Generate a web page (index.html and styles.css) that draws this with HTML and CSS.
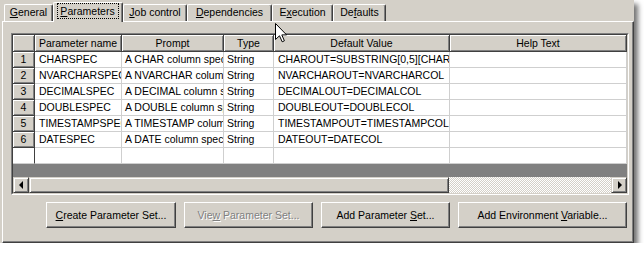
FILE: index.html
```html
<!DOCTYPE html>
<html lang="en">
<head>
  <meta charset="UTF-8" />
  <title>Job Properties – Parameters</title>
  <link rel="stylesheet" href="styles.css">
</head>
<body>
<div class="window">

  <!-- ── Tab strip ───────────────────────── -->
  <div class="tabs">
    <div class="tab t-general"><u>G</u>eneral</div>
    <div class="tab tab-active t-params"><span class="focus"><u>P</u>arameters</span></div>
    <div class="tab t-job"><u>J</u>ob control</div>
    <div class="tab t-deps"><u>D</u>ependencies</div>
    <div class="tab t-exec">E<u>x</u>ecution</div>
    <div class="tab t-defaults">De<u>f</u>aults</div>
  </div>

  <div class="panel">

    <!-- ── Parameter grid ──────────────────── -->
    <div class="grid">
      <div class="grid-inner">
        <div class="row grid-head">
          <div class="cell rh"></div>
          <div class="cell hd">Parameter name</div>
          <div class="cell hd">Prompt</div>
          <div class="cell hd">Type</div>
          <div class="cell hd">Default Value</div>
          <div class="cell hd">Help Text</div>
        </div>
        <div class="row">
          <div class="cell rh">1</div>
          <div class="cell">CHARSPEC</div>
          <div class="cell c-tight">A CHAR column spec</div>
          <div class="cell c-tight">String</div>
          <div class="cell">CHAROUT=SUBSTRING[0,5][CHARCOL]</div>
          <div class="cell"></div>
        </div>
        <div class="row">
          <div class="cell rh">2</div>
          <div class="cell">NVARCHARSPEC</div>
          <div class="cell c-tight">A NVARCHAR column spec</div>
          <div class="cell c-tight">String</div>
          <div class="cell">NVARCHAROUT=NVARCHARCOL</div>
          <div class="cell"></div>
        </div>
        <div class="row">
          <div class="cell rh">3</div>
          <div class="cell">DECIMALSPEC</div>
          <div class="cell c-tight">A DECIMAL column spec</div>
          <div class="cell c-tight">String</div>
          <div class="cell">DECIMALOUT=DECIMALCOL</div>
          <div class="cell"></div>
        </div>
        <div class="row">
          <div class="cell rh">4</div>
          <div class="cell">DOUBLESPEC</div>
          <div class="cell c-tight">A DOUBLE column spec</div>
          <div class="cell c-tight">String</div>
          <div class="cell">DOUBLEOUT=DOUBLECOL</div>
          <div class="cell"></div>
        </div>
        <div class="row">
          <div class="cell rh">5</div>
          <div class="cell">TIMESTAMPSPEC</div>
          <div class="cell c-tight">A TIMESTAMP column spec</div>
          <div class="cell c-tight">String</div>
          <div class="cell">TIMESTAMPOUT=TIMESTAMPCOL</div>
          <div class="cell"></div>
        </div>
        <div class="row">
          <div class="cell rh">6</div>
          <div class="cell">DATESPEC</div>
          <div class="cell c-tight">A DATE column spec</div>
          <div class="cell c-tight">String</div>
          <div class="cell">DATEOUT=DATECOL</div>
          <div class="cell"></div>
        </div>
        <div class="row row-new">
          <div class="cell rh-new"></div>
          <div class="cell"></div>
          <div class="cell"></div>
          <div class="cell"></div>
          <div class="cell"></div>
          <div class="cell"></div>
        </div>
        <div class="grid-fill"></div>

        <!-- horizontal scrollbar -->
        <div class="hscroll">
          <div class="sb-btn"><span class="arrow-left"></span></div>
          <div class="sb-thumb"></div>
          <div class="sb-track"></div>
          <div class="sb-btn"><span class="arrow-right"></span></div>
        </div>
      </div>
    </div>

    <!-- ── Buttons ─────────────────────────── -->
    <div class="buttons">
      <button class="btn b-create"><u>C</u>reate Parameter Set...</button>
      <button class="btn b-view" disabled>Vie<u>w</u> Parameter Set...</button>
      <button class="btn b-add">Add Parameter <u>S</u>et...</button>
      <button class="btn b-env">Add Environment <u>V</u>ariable...</button>
    </div>
  </div>

  <!-- mouse pointer over the tab strip -->
  <svg class="cursor" width="13" height="20" viewBox="0 0 13 20">
    <path d="M0.5 0.5 L0.5 16.5 L4.5 12.8 L7.2 18.8 L9.4 17.8 L6.8 11.9 L11.6 11.9 Z" fill="#fff" stroke="#000" stroke-width="1" stroke-linejoin="miter"/>
  </svg>
</div>
</body>
</html>
```

FILE: styles.css
```css
html,body{margin:0;padding:0;background:#fff;}
body{font-family:"Liberation Sans",Arial,sans-serif;font-size:10.5px;color:#000;}
u{text-decoration:underline;text-underline-offset:1px;}

/* window + tab strip */
.window{position:relative;width:634px;height:243px;box-sizing:border-box;padding-left:2px;background:#d4d0c8;display:flex;flex-direction:column;box-shadow:4px 4px 5px rgba(0,0,0,.55);}
.tabs{display:flex;align-items:flex-end;height:21px;padding-left:2px;flex:none;}
.tab{box-sizing:border-box;height:17px;padding-top:1px;line-height:13px;text-align:center;white-space:nowrap;border-top:1px solid #fff;border-left:1px solid #fff;border-right:1px solid #404040;box-shadow:inset -1px 0 #808080;border-radius:2px 2px 0 0;}
.tab-active{height:20px;margin-bottom:-1px;padding-top:2px;position:relative;z-index:1;background:#d4d0c8;}
.focus{outline:1px dotted #000;outline-offset:0;padding:1px 3px 1px 2px;}
.t-general{width:49px;}
.t-params{width:70px;}
.t-job{width:64px;}
.t-deps{width:85px;}
.t-exec{width:61px;}
.t-defaults{width:53px;}

.panel{flex:1;box-sizing:border-box;border:1px solid;border-color:#fff #404040 #404040 #fff;box-shadow:inset -1px -1px #808080;padding:11px 0 0 8px;}

/* grid */
.grid{width:618px;box-sizing:border-box;border:1px solid;border-color:#808080 #fff #fff #808080;}
.grid-inner{border:1px solid;border-color:#404040 #d4d0c8 #d4d0c8 #404040;}
.row{display:grid;grid-template-columns:22px 87px 102px 50px 176px 177px;height:16px;}
.grid-head{height:17px;}
.cell{box-sizing:border-box;border-right:1px solid #cfcfcf;border-bottom:1px solid #cfcfcf;background:#fff;padding-left:4px;line-height:15px;white-space:nowrap;overflow:hidden;}
.c-tight{padding-left:3px;}
.hd,.rh{background:#d4d0c8;border-color:#404040;box-shadow:inset 1px 1px #fff,inset -1px -1px #808080;text-align:center;padding:0;}
.grid-head .cell{line-height:16px;}
.rh-new{border-right-color:#404040;}
.grid-fill{height:13px;background:#808080;}

/* scrollbar */
.hscroll{display:flex;height:16px;}
.sb-btn,.sb-thumb{box-sizing:border-box;height:16px;background:#d4d0c8;border:1px solid;border-color:#d4d0c8 #404040 #404040 #d4d0c8;box-shadow:inset 1px 1px #fff,inset -1px -1px #808080;}
.sb-btn{width:16px;display:flex;align-items:center;justify-content:center;}
.sb-thumb{width:420px;}
.sb-track{flex:1;background-color:#fff;background-image:conic-gradient(#d4d0c8 25%,#fff 0 50%,#d4d0c8 0 75%,#fff 0);background-size:2px 2px;}
.arrow-left{width:0;height:0;border-top:4px solid transparent;border-bottom:4px solid transparent;border-right:4px solid #000;margin-left:-1px;}
.arrow-right{width:0;height:0;border-top:4px solid transparent;border-bottom:4px solid transparent;border-left:4px solid #000;margin-left:1px;}

/* buttons */
.buttons{display:flex;justify-content:flex-end;gap:8px;width:618px;box-sizing:border-box;padding-right:2px;margin-top:7px;}
.btn{height:26px;padding:0;font:inherit;color:#000;background:#d4d0c8;border:1px solid;border-color:#fff #404040 #404040 #fff;box-shadow:inset -1px -1px #808080;border-radius:0;white-space:nowrap;}
.btn:disabled{color:#808080;text-shadow:1px 1px #fff;}
.b-create{width:130px;}
.b-view{width:129px;}
.b-add{width:129px;}
.b-env{width:169px;}

.cursor{position:absolute;left:275px;top:23px;z-index:5;}
```
